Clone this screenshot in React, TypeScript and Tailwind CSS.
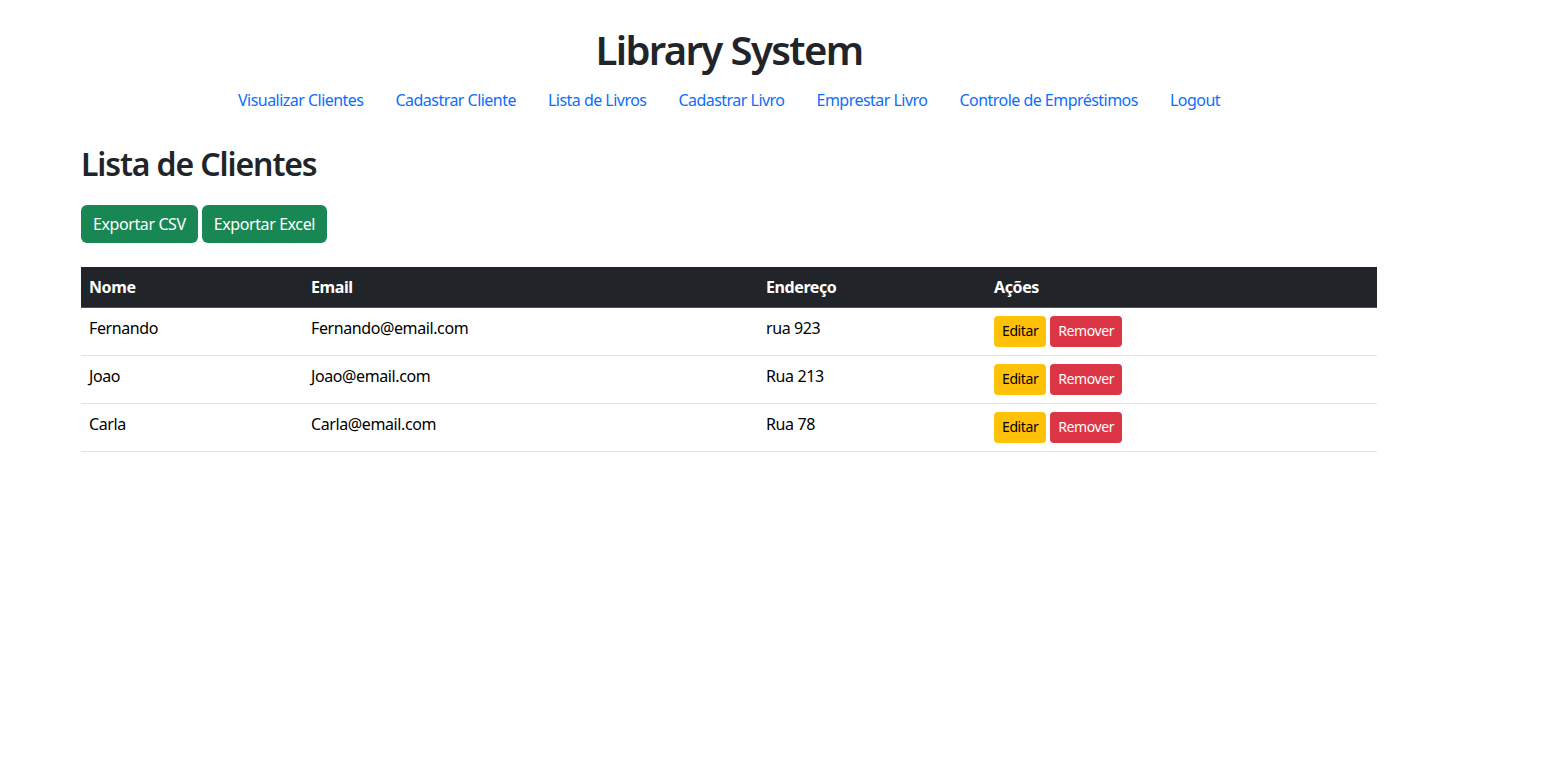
import React from 'react'

const navLinks = [
  'Visualizar Clientes',
  'Cadastrar Cliente',
  'Lista de Livros',
  'Cadastrar Livro',
  'Emprestar Livro',
  'Controle de Empréstimos',
  'Logout',
]

const clientes = [
  { nome: 'Fernando', email: 'Fernando@email.com', endereco: 'rua 923' },
  { nome: 'Joao', email: 'Joao@email.com', endereco: 'Rua 213' },
  { nome: 'Carla', email: 'Carla@email.com', endereco: 'Rua 78' },
]

export default function App() {
  return (
    <div
      className="min-h-screen bg-white text-[#212529] tracking-[-0.025em]"
      style={{ fontFamily: "'Noto Sans', 'Liberation Sans', sans-serif" }}
    >
      <div className="w-[1458px]">
        {/* Header */}
        <h1 className="pt-[26px] text-center text-[40px] leading-[48px] font-semibold tracking-[-0.04em]">
          Library System
        </h1>
        <nav className="mt-[6px] flex justify-center tracking-[-0.033em]">
          {navLinks.map((link) => (
            <a key={link} href="#" className="px-4 py-2 text-base leading-6 text-[#0d6efd]">
              {link}
            </a>
          ))}
        </nav>

        <div className="mx-auto w-[1320px] px-3">
          <h2 className="mt-[25px] text-[32px] leading-[38px] font-semibold tracking-[-0.035em]">Lista de Clientes</h2>

          <div className="mt-[22px] flex gap-1">
            <button className="h-[38px] rounded-md bg-[#198754] px-3 text-base text-white">Exportar CSV</button>
            <button className="h-[38px] rounded-md bg-[#198754] px-3 text-base text-white">Exportar Excel</button>
          </div>

          <table className="mt-6 w-full table-fixed border-collapse text-left text-base">
            <colgroup>
              <col className="w-[222px]" />
              <col className="w-[455px]" />
              <col className="w-[228px]" />
              <col />
            </colgroup>
            <thead>
              <tr className="h-[40px] border-b border-[#4d5154] bg-[#212529] text-white">
                <th className="px-2 font-bold">Nome</th>
                <th className="px-2 font-bold">Email</th>
                <th className="px-2 font-bold">Endereço</th>
                <th className="px-2 font-bold">Ações</th>
              </tr>
            </thead>
            <tbody>
              {clientes.map((c) => (
                <tr key={c.nome} className="h-[48px] border-b border-[#dee2e6]">
                  <td className="px-2 align-middle text-black">
                    <span className="relative -top-[3px]">{c.nome}</span>
                  </td>
                  <td className="px-2 align-middle text-black">
                    <span className="relative -top-[3px]">{c.email}</span>
                  </td>
                  <td className="px-2 align-middle text-black">
                    <span className="relative -top-[3px]">{c.endereco}</span>
                  </td>
                  <td className="px-2 align-middle">
                    <div className="flex gap-1">
                      <button className="h-[31px] rounded bg-[#ffc107] px-2 text-sm text-black">Editar</button>
                      <button className="h-[31px] rounded bg-[#dc3545] px-2 text-sm text-white">Remover</button>
                    </div>
                  </td>
                </tr>
              ))}
            </tbody>
          </table>
        </div>
      </div>
    </div>
  )
}
